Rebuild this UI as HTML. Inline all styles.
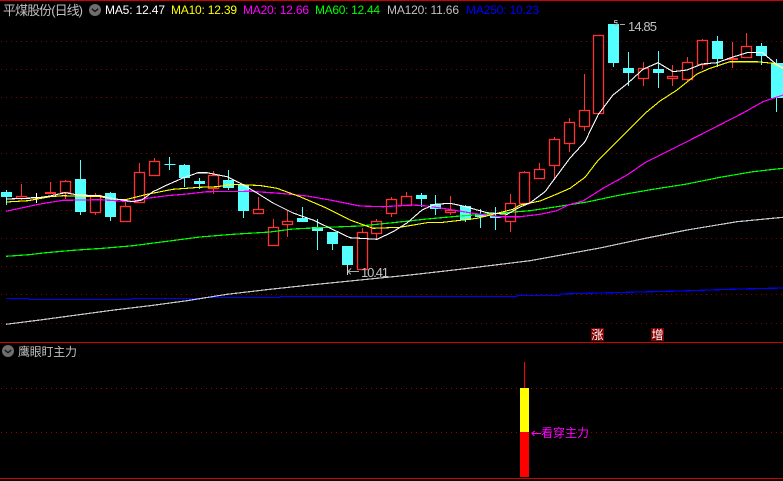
<!DOCTYPE html>
<html><head><meta charset="utf-8"><style>
html,body{margin:0;padding:0;background:#000;width:783px;height:481px;overflow:hidden}
svg{display:block}
text{font-family:"Liberation Sans","WenQuanYi Zen Hei","Noto Sans CJK SC",sans-serif;font-size:12px}
</style></head><body>
<svg width="783" height="481" viewBox="0 0 783 481" xmlns="http://www.w3.org/2000/svg">
<rect width="783" height="481" fill="#000"/>
<g shape-rendering="crispEdges" stroke="#800000" stroke-width="1" stroke-dasharray="1 4" fill="none">
<path d="M1 41.5H783M1 69.5H783M1 97.5H783M1 125.5H783M1 153.5H783M1 182.5H783M1 210.5H783M1 238.5H783M1 266.5H783M1 294.5H783M1 323.5H783"/>
<path stroke="#a00000" d="M1 388.5H783M1 432.5H783"/>
</g>
<g shape-rendering="crispEdges" fill="#d00000">
<rect x="0" y="0" width="783" height="1"/>
<rect x="0" y="342" width="783" height="1"/>
<rect x="0" y="478" width="783" height="1"/>
</g>
<!-- wicks -->
<path shape-rendering="crispEdges" fill="none" stroke="#ff3232" d="M21.5 184V200M50.5 182V194M65.5 180V199M95.5 193V215M125.5 202V222M139.5 163V203M154.5 158V176M213.5 171V194M258.5 197V214M273.5 219V246M287.5 211V237M362.5 228V270M376.5 219V239M391.5 197V217M406.5 192V205M450.5 196V215M510.5 194V232M524.5 171V204M539.5 163V179M554.5 137V180M569.5 118V152M584.5 74V131M643.5 62V86M672.5 65V86M687.5 57V82M702.5 39V69M732.5 42V68M746.5 33V58"/>
<path shape-rendering="crispEdges" fill="none" stroke="#54ffff" d="M6.5 190V205M80.5 160V215M110.5 192V221M169.5 157V170M184.5 164V187M199.5 178V189M228.5 170V190M243.5 185V218M302.5 207V222M317.5 219V250M332.5 232V250M421.5 193V207M435.5 195V215M465.5 205V222M480.5 209V228M495.5 207V230M613.5 24V67M628.5 52V86M658.5 51V88M717.5 36V67M761.5 43V65M776.5 59V112M164.5 164.5H175.5"/>
<path shape-rendering="crispEdges" fill="none" stroke="#fff" d="M36.5 193V203M31 197.5H42"/>
<path shape-rendering="crispEdges" fill="none" stroke="#d8d8d8" d="M347.5 265V275"/>
<!-- red hollow bodies -->
<g fill="#000" stroke="#ff3232" stroke-width="1.3">
<rect x="16.5" y="196.5" width="10" height="2"/>
<rect x="60.5" y="181.5" width="10" height="11"/>
<rect x="90.5" y="195.5" width="10" height="17"/>
<rect x="120.5" y="206.5" width="10" height="15"/>
<rect x="134.5" y="172.5" width="10" height="30"/>
<rect x="149.5" y="161.5" width="10" height="14"/>
<rect x="208.5" y="175.5" width="10" height="13"/>
<rect x="253.5" y="209.5" width="10" height="4"/>
<rect x="268.5" y="227.5" width="10" height="18"/>
<rect x="282.5" y="221.5" width="10" height="3"/>
<rect x="357.5" y="232.5" width="10" height="37"/>
<rect x="371.5" y="221.5" width="10" height="12"/>
<rect x="386.5" y="199.5" width="10" height="14"/>
<rect x="401.5" y="196.5" width="10" height="9"/>
<rect x="445.5" y="210.5" width="10" height="2"/>
<rect x="505.5" y="203.5" width="10" height="18"/>
<rect x="519.5" y="172.5" width="10" height="31"/>
<rect x="534.5" y="169.5" width="10" height="9"/>
<rect x="549.5" y="139.5" width="10" height="26"/>
<rect x="564.5" y="122.5" width="10" height="21"/>
<rect x="579.5" y="110.5" width="10" height="16"/>
<rect x="593.5" y="35.5" width="10" height="78"/>
<rect x="638.5" y="68.5" width="10" height="10"/>
<rect x="667.5" y="76.5" width="10" height="2"/>
<rect x="682.5" y="62.5" width="10" height="17"/>
<rect x="697.5" y="40.5" width="10" height="24"/>
<rect x="741.5" y="46.5" width="10" height="11"/>
</g>
<g shape-rendering="crispEdges" fill="#ff3232">
<rect x="45" y="192" width="11" height="2"/>
<rect x="727" y="58" width="11" height="2"/>
</g>
<!-- cyan bodies -->
<g shape-rendering="crispEdges" fill="#54ffff">
<rect x="1" y="192" width="11" height="5"/>
<rect x="75" y="179" width="11" height="33"/>
<rect x="105" y="193" width="11" height="24"/>
<rect x="179" y="165" width="11" height="13"/>
<rect x="194" y="181" width="11" height="3"/>
<rect x="223" y="180" width="11" height="8"/>
<rect x="238" y="185" width="11" height="26"/>
<rect x="297" y="218" width="11" height="4"/>
<rect x="312" y="227" width="11" height="4"/>
<rect x="327" y="232" width="11" height="12"/>
<rect x="342" y="246" width="11" height="19"/>
<rect x="416" y="195" width="11" height="4"/>
<rect x="430" y="204" width="11" height="5"/>
<rect x="460" y="206" width="11" height="14"/>
<rect x="475" y="214" width="11" height="3"/>
<rect x="490" y="216" width="11" height="2"/>
<rect x="608" y="24" width="11" height="39"/>
<rect x="623" y="68" width="11" height="5"/>
<rect x="653" y="69" width="11" height="4"/>
<rect x="712" y="41" width="11" height="18"/>
<rect x="756" y="46" width="11" height="10"/>
<rect x="771" y="63" width="12" height="35"/>
</g>
<!-- moving averages -->
<g fill="none" stroke-linejoin="round" shape-rendering="crispEdges">
<polyline stroke="#0000ff" stroke-width="1.2" points="6,298.5 29,298.5 29,299.5 132,299.5 132,298.5 203,298.5 203,297.5 280,297.5 280,296.5 517,296.5 517,295.5 560,295.5 560,294 600,293 640,292 680,291 740,289 783,288"/>
<polyline stroke="#c8c8c8" stroke-width="1.2" points="6,324.3 40,320 114,310 150,305.7 187,300.7 227,294.3 270,289.3 310,285 360,280 410,275 460,269.3 530,260.7 600,248 642,239 687,230 737,221.7 783,217.3"/>
<polyline stroke="#00ff00" stroke-width="1.2" points="6,256.3 29,254.7 43,253 73,250.3 103,248.3 133,245.7 167,241.3 200,237 233,234.3 270,232 293,229 327,227.3 360,226 393,222.7 427,219 460,216 493,213.7 530,210.7 553,207.3 587,202 620,195 653,189.3 687,184 720,177.3 753,171.7 783,168.3"/>
<polyline stroke="#ff00ff" stroke-width="1.2" points="6,211.3 20,208.3 40,204 63,200.3 83,200 100,199.7 130,201.7 147,198.3 167,195.7 187,194 207,191.7 250,191.3 280,193.3 307,196 330,200 360,206 383,206.7 413,205 427,206 447,209 473,213.3 500,216.7 520,216.7 540,214.3 557,210.7 568,205 583,201 603,188.3 627,175 645,162.7 667,151.7 700,135 743,113 763,101.7 783,95"/>
<polyline stroke="#ffff00" stroke-width="1.1" points="6,202 28,200.7 50,196.7 63,195.7 100,196.7 117,199.3 127,199.3 147,194.3 173,189.3 200,187.3 217,186.7 233,184.3 260,185.5 277,188.3 300,196.7 327,208.3 350,220 373,228.3 400,227.3 427,222.7 443,222.3 457,220.7 477,218.3 493,214.3 513,209.3 520,205 540,201 557,194 570,188.3 585,177.3 597,161.7 620,138.3 647,111.7 660,101 677,90 697,74 710,68.3 730,61.7 757,61.7 773,63.3 783,68.3"/>
<polyline stroke="#ffffff" stroke-width="1.1" points="6,199 21,198.5 36,198 50,196 65,192.7 78,195 100,195.7 110,198 133,201.7 142,200 153,191.7 167,185 183,178 198,172.7 207,172.7 227,176.7 240,183 257,193 273,203 293,213 313,220 327,226.7 350,237.7 377,239.3 393,231.7 407,223 422,210 435,204.3 450,203.3 463,206 487,212.7 507,214.3 520,207 530,203 545,191.7 555,178.3 570,158 585,141.7 598,115 613,95 628,83 643,69.3 658,62.7 673,71.7 687,70 702,64 717,62.7 732,57.3 747,52.7 762,52.3 776,64 783,68"/>
</g>
<!-- header -->
<text x="3" y="15" fill="#c0c0c0" style="font-size:13px" textLength="80">平煤股份(日线)</text>
<circle cx="95" cy="10" r="6" fill="#6e6e6e"/>
<path d="M91.8 8.8L95 11.5L98.2 8.8" fill="none" stroke="#111" stroke-width="1.3"/>
<text x="105" y="14" fill="#ffffff" textLength="60">MA5: 12.47</text>
<text x="171" y="14" fill="#ffff00" textLength="66">MA10: 12.39</text>
<text x="243" y="14" fill="#ff00ff" textLength="66">MA20: 12.66</text>
<text x="315" y="14" fill="#00ff00" textLength="65">MA60: 12.44</text>
<text x="387" y="14" fill="#c0c0c0" textLength="72">MA120: 11.66</text>
<text x="466" y="14" fill="#0000ff" textLength="73">MA250: 10.23</text>
<!-- price labels -->
<path d="M620 24.500h5M614.500 20.500h3M614.500 20.500v2h2.500v2.500h-3" fill="none" stroke="#a8a8a8" shape-rendering="crispEdges"/>
<text x="628" y="31" fill="#c0c0c0" style="font-size:13px" textLength="29">14.85</text>
<path d="M359 271.500H348M351 268.500L348 271.500L351 274.500" fill="none" stroke="#a8a8a8" shape-rendering="crispEdges"/>
<text x="361" y="277" fill="#c0c0c0" style="font-size:13px" textLength="28">10.41</text>
<!-- badges -->
<rect x="591" y="328" width="13" height="13" fill="#800000"/>
<text x="591.500" y="339" fill="#fff">涨</text>
<rect x="651" y="328" width="13" height="13" fill="#800000"/>
<text x="651.500" y="339" fill="#fff">增</text>
<!-- lower panel -->
<circle cx="8" cy="351" r="6" fill="#6e6e6e"/>
<path d="M4.800 350L8 352.700L11.200 350" fill="none" stroke="#111" stroke-width="1.3"/>
<text x="18" y="356" fill="#c0c0c0" textLength="59">鹰眼盯主力</text>
<g shape-rendering="crispEdges">
<rect x="524" y="362" width="1" height="26" fill="#ff0000"/>
<rect x="520" y="388" width="9" height="44" fill="#ffff00"/>
<rect x="520" y="432" width="9" height="45" fill="#ff0000"/>
</g>
<path d="M541 433.500H532M534.500 431L532 433.500L534.500 436" fill="none" stroke="#ff00ff" shape-rendering="crispEdges"/>
<text x="541" y="437" fill="#ff00ff" textLength="48">看穿主力</text>
</svg>
</body></html>
